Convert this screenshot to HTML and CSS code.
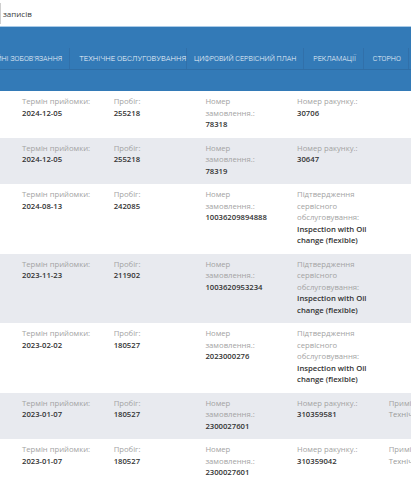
FILE: index.html
```html
<!DOCTYPE html>
<html lang="uk">
<head>
<meta charset="utf-8">
<link rel="stylesheet" href="styles.css">
</head>
<body>
<div class="page">
  <div class="topbar"><span class="len">записів</span></div>
  <div class="header">
    <ul class="tabs">
      <li class="tab">ГАРАНТІЙНІ ЗОБОВ'ЯЗАННЯ</li>
      <li class="tab tab-wide">ТЕХНІЧНЕ ОБСЛУГОВУВАННЯ</li>
      <li class="tab">ЦИФРОВИЙ СЕРВІСНИЙ ПЛАН</li>
      <li class="tab">РЕКЛАМАЦІЇ</li>
      <li class="tab">СТОРНО</li>
    </ul>
  </div>
  <div class="list">
    <div class="row">
      <div class="cell"><div class="lbl">Термін прийомки:</div><div class="val">2024-12-05</div></div>
      <div class="cell"><div class="lbl">Пробіг:</div><div class="val">255218</div></div>
      <div class="cell"><div class="lbl">Номер замовлення.:</div><div class="val">78318</div></div>
      <div class="cell"><div class="lbl">Номер ракунку.:</div><div class="val">30706</div></div>
      <div class="cell"></div>
    </div>
    <div class="row alt">
      <div class="cell"><div class="lbl">Термін прийомки:</div><div class="val">2024-12-05</div></div>
      <div class="cell"><div class="lbl">Пробіг:</div><div class="val">255218</div></div>
      <div class="cell"><div class="lbl">Номер замовлення.:</div><div class="val">78319</div></div>
      <div class="cell"><div class="lbl">Номер ракунку.:</div><div class="val">30647</div></div>
      <div class="cell"></div>
    </div>
    <div class="row">
      <div class="cell"><div class="lbl">Термін прийомки:</div><div class="val">2024-08-13</div></div>
      <div class="cell"><div class="lbl">Пробіг:</div><div class="val">242085</div></div>
      <div class="cell"><div class="lbl">Номер замовлення.:</div><div class="val">10036209894888</div></div>
      <div class="cell"><div class="lbl">Підтвердження сервісного обслуговування:</div><div class="val">Inspection with Oil change (flexible)</div></div>
      <div class="cell"></div>
    </div>
    <div class="row alt">
      <div class="cell"><div class="lbl">Термін прийомки:</div><div class="val">2023-11-23</div></div>
      <div class="cell"><div class="lbl">Пробіг:</div><div class="val">211902</div></div>
      <div class="cell"><div class="lbl">Номер замовлення.:</div><div class="val">1003620953234</div></div>
      <div class="cell"><div class="lbl">Підтвердження сервісного обслуговування:</div><div class="val">Inspection with Oil change (flexible)</div></div>
      <div class="cell"></div>
    </div>
    <div class="row">
      <div class="cell"><div class="lbl">Термін прийомки:</div><div class="val">2023-02-02</div></div>
      <div class="cell"><div class="lbl">Пробіг:</div><div class="val">180527</div></div>
      <div class="cell"><div class="lbl">Номер замовлення.:</div><div class="val">2023000276</div></div>
      <div class="cell"><div class="lbl">Підтвердження сервісного обслуговування:</div><div class="val">Inspection with Oil change (flexible)</div></div>
      <div class="cell"></div>
    </div>
    <div class="row alt">
      <div class="cell"><div class="lbl">Термін прийомки:</div><div class="val">2023-01-07</div></div>
      <div class="cell"><div class="lbl">Пробіг:</div><div class="val">180527</div></div>
      <div class="cell"><div class="lbl">Номер замовлення.:</div><div class="val">2300027601</div></div>
      <div class="cell"><div class="lbl">Номер ракунку.:</div><div class="val">310359581</div></div>
      <div class="cell"><div class="lbl">Примітка:</div><div class="note">Технічне обслуговування</div></div>
    </div>
    <div class="row">
      <div class="cell"><div class="lbl">Термін прийомки:</div><div class="val">2023-01-07</div></div>
      <div class="cell"><div class="lbl">Пробіг:</div><div class="val">180527</div></div>
      <div class="cell"><div class="lbl">Номер замовлення.:</div><div class="val">2300027601</div></div>
      <div class="cell"><div class="lbl">Номер ракунку.:</div><div class="val">310359042</div></div>
      <div class="cell"><div class="lbl">Примітка:</div><div class="note">Технічне обслуговування</div></div>
    </div>
  </div>
</div>
</body>
</html>
```

FILE: styles.css
```css
html, body {
  margin: 0;
  padding: 0;
  background: #ffffff;
}
body {
  width: 411px;
  height: 480px;
  overflow: hidden;
  font-family: "Open Sans", "Noto Sans", sans-serif;
  font-size: 7.7px;
  color: #333333;
}
.page {
  width: 411px;
}
.topbar {
  height: 26px;
  display: flex;
  align-items: center;
  border-bottom: 1px solid #a9cbe8;
}
.len {
  display: block;
  border-left: 1px solid #cfcfcf;
  padding: 5px 0 5px 2px;
  line-height: 11px;
  font-size: 8px;
  color: #3a3a3a;
}
.header {
  background: #337ab7;
  height: 64px;
  padding-top: 21px;
  box-sizing: border-box;
  overflow: hidden;
}
.tabs {
  list-style: none;
  margin: 0 0 0 -38px;
  padding: 0;
  display: flex;
  width: 470px;
  height: 21px;
  border-bottom: 1px solid #2f6ea6;
}
.tab {
  flex: none;
  display: flex;
  align-items: center;
  padding: 0 7px 0 7px;
  margin-right: 2px;
  border-right: 1px solid #3170aa;
  font-family: Roboto, "Liberation Sans", sans-serif;
  font-weight: 300;
  font-size: 7.2px;
  color: #eef4fa;
  white-space: nowrap;
}
.tab-wide {
  font-size: 7.7px;
  padding-right: 0;
  margin-right: 0;
}
.list {
  display: flex;
  flex-direction: column;
}
.row {
  display: grid;
  grid-template-columns: repeat(5, 91.7px);
  padding: 5px 0 7px 22px;
  line-height: 11.5px;
  background: #ffffff;
}
.row.alt {
  background: #e8eaef;
}
.cell {
  padding-right: 18px;
  min-width: 0;
}
.lbl {
  color: #a3a3a3;
  font-weight: 400;
}
.val {
  color: #333333;
  font-weight: 600;
}
.note {
  color: #9a9a9a;
  white-space: nowrap;
}
```
